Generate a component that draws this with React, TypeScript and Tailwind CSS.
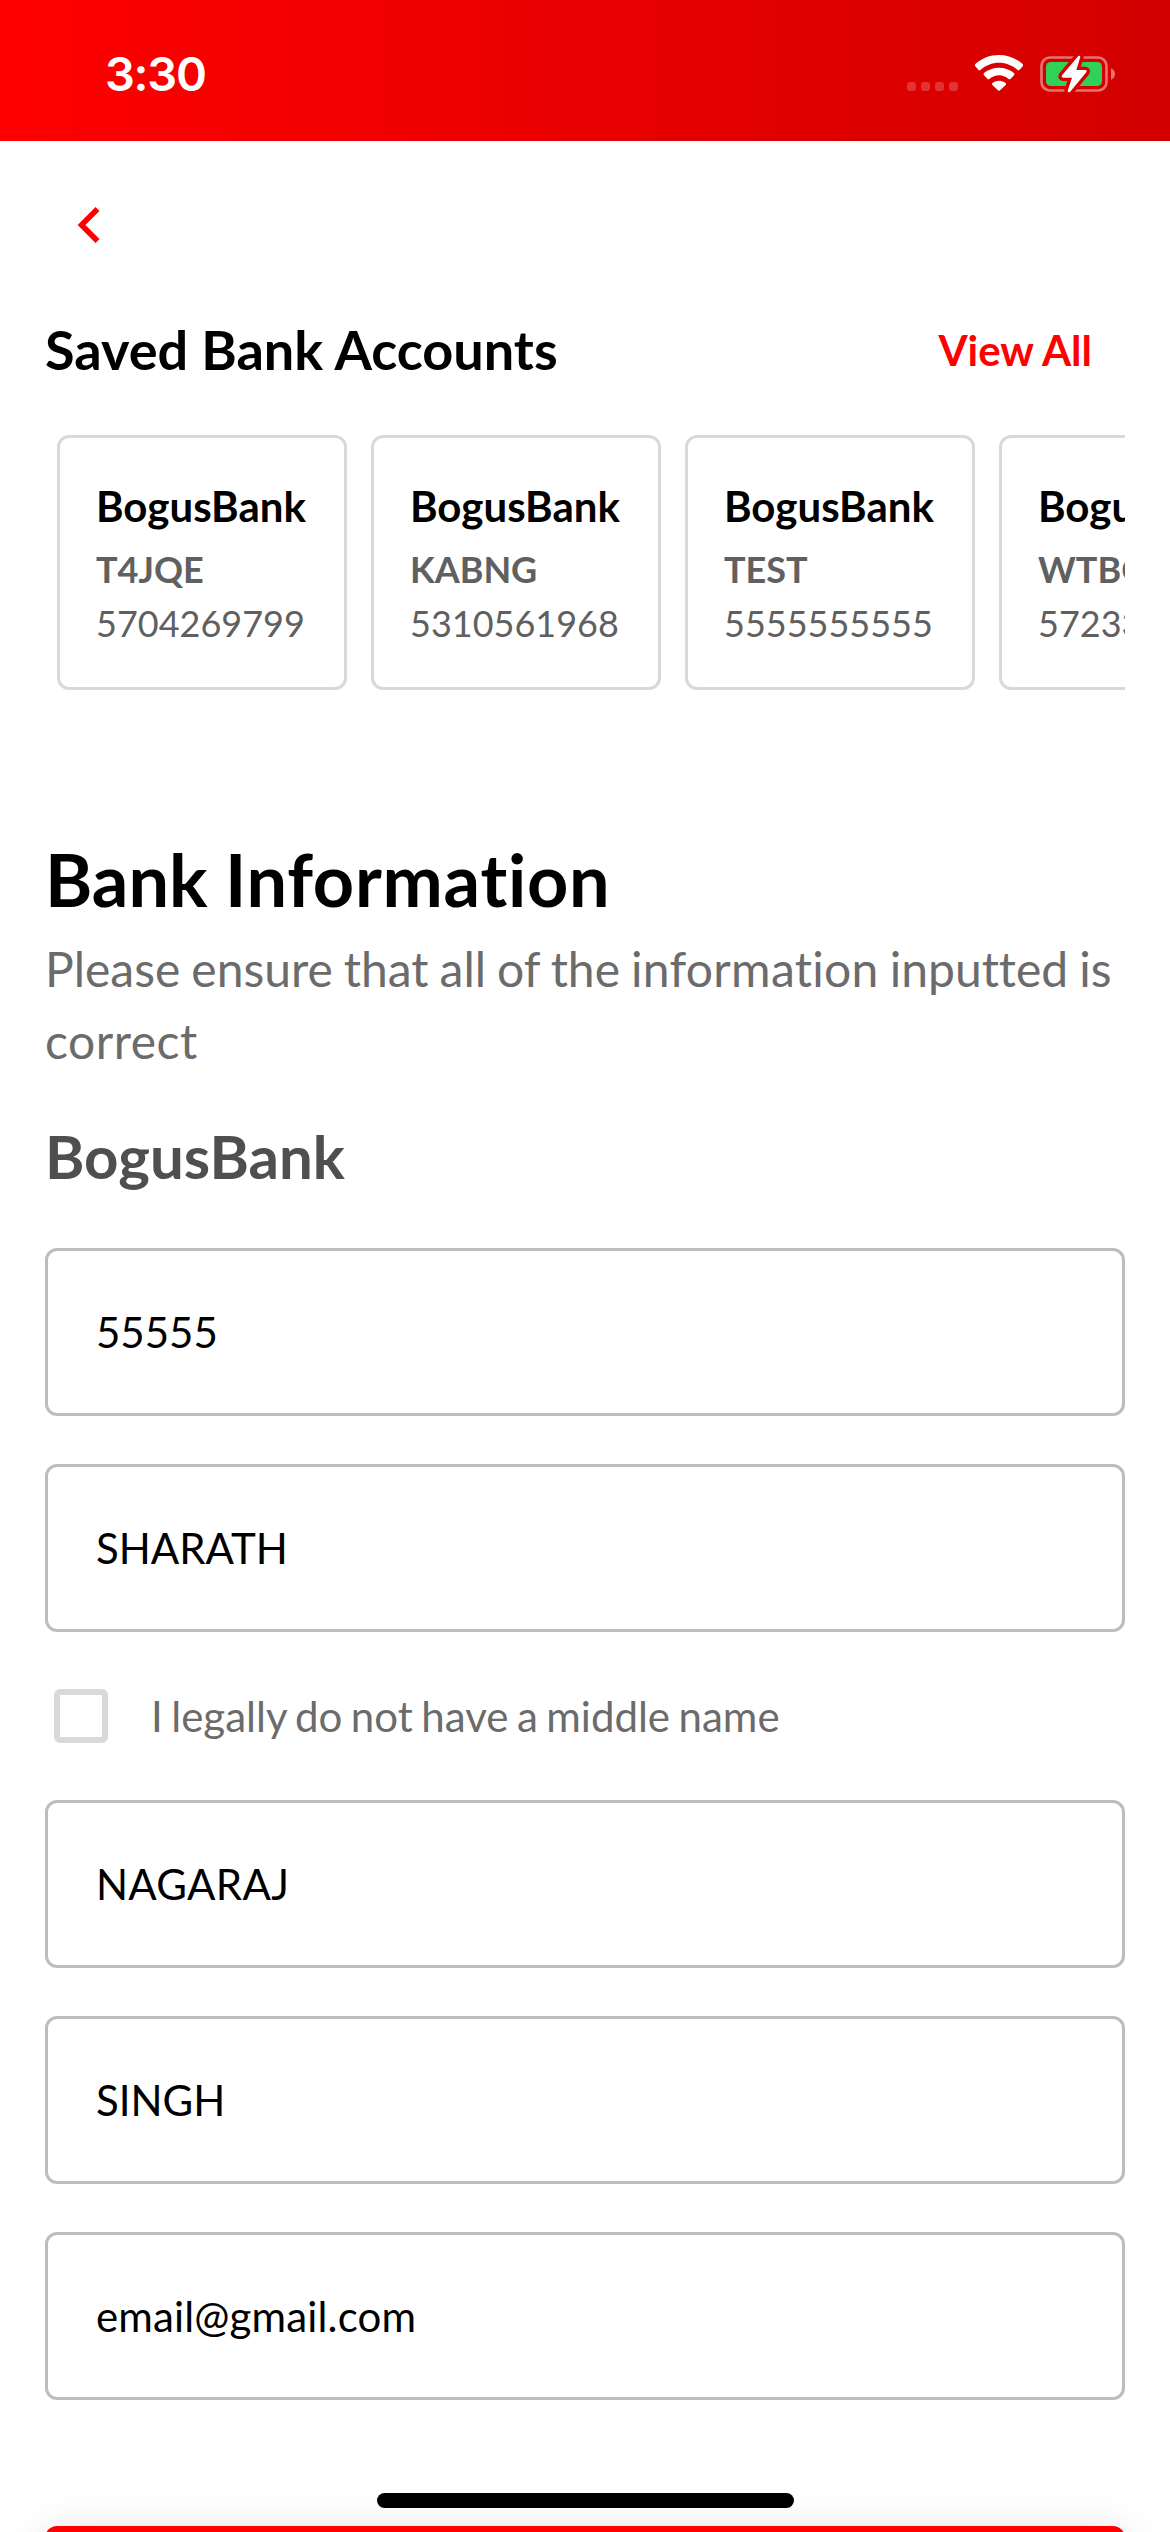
const accounts = [
  { bank: "BogusBank", code: "T4JQE", number: "5704269799" },
  { bank: "BogusBank", code: "KABNG", number: "5310561968" },
  { bank: "BogusBank", code: "TEST", number: "5555555555" },
  { bank: "BogusBank", code: "WTBGQ", number: "5723310482" },
];

function StatusBar() {
  return (
    <header className="flex h-[141px] shrink-0 items-start justify-between bg-linear-to-r from-[#ff0000] to-[#d20000] pl-[105px] pr-[54px]">
      <span className="mt-[45px] font-['Inter',sans-serif] text-[47px] leading-[58px] font-semibold tracking-[-1.3px] text-white">
        3:30
      </span>
      <div className="mt-[52px] flex items-start">
        <div className="mt-[30px] mr-[17px] flex gap-[5px]">
          <i className="size-[9px] rounded-[3px] bg-white/20" />
          <i className="size-[9px] rounded-[3px] bg-white/20" />
          <i className="size-[9px] rounded-[3px] bg-white/20" />
          <i className="size-[9px] rounded-[3px] bg-white/20" />
        </div>
        <svg className="mt-[3px] mr-[17px] h-9 w-12" viewBox="0 0 144 108" fill="#fff">
          <path d="M72 0C99 0 124 10 143 27Q146 30 143 34L134 44Q131 48 127 44C112 31 93 23 72 23S32 31 17 44Q13 48 10 44L1 34Q-2 30 1 27C20 10 45 0 72 0Z" />
          <path d="M72 38C89 38 105 44 117 54Q120 57 117 61L107 71Q103 74 100 71C92 65 82 61 72 61S52 65 44 71Q41 74 37 71L27 61Q24 57 27 54C39 44 55 38 72 38Z" />
          <path d="M72 77C80 77 87 80 92 84Q94 87 92 90L75 106Q72 109 69 106L52 90Q50 87 52 84C57 80 64 77 72 77Z" />
        </svg>
        <svg className="h-[44px] w-[76px]" viewBox="480 96 228 132">
          <rect x="484.500" y="112.500" width="195" height="99" rx="25" fill="none" stroke="#e87070" strokeWidth="8" />
          <path d="M693 145Q705 150 705 162T693 179Z" fill="#e87070" />
          <rect x="498" y="126" width="168" height="72" rx="14" fill="#30d158" />
          <path
            d="M595 108L546 166Q543 172 549 173H576L563 212Q564 219 570 216L619 157Q622 151 616 150H589L601 111Q600 105 595 108Z"
            fill="#d70000"
            stroke="#d70000"
            strokeWidth="20"
            strokeLinejoin="round"
          />
          <path
            d="M595 108L546 166Q543 172 549 173H576L563 212Q564 219 570 216L619 157Q622 151 616 150H589L601 111Q600 105 595 108Z"
            fill="#fff"
          />
        </svg>
      </div>
    </header>
  );
}

function Field({ value, tracking = "" }: { value: string; tracking?: string }) {
  return (
    <div
      className={`flex h-[168px] items-center rounded-[12px] border-[3px] border-[#bdbdbd] pl-12 text-[42px] leading-[50px] text-black ${tracking}`}
    >
      {value}
    </div>
  );
}

export default function App() {
  return (
    <div className="relative flex h-[2532px] w-[1170px] flex-col overflow-hidden bg-white font-['Lato',sans-serif] text-black [font-variant-ligatures:none]">
      <StatusBar />
      <main className="flex flex-col px-[45px]">
        <button className="mt-[66px] ml-[32px] h-9 w-6" aria-label="Back">
          <svg className="h-9 w-6" viewBox="0 0 24 36" fill="none" stroke="#ff0000" strokeWidth="5.500">
            <path d="M20.500 2L4.500 18L20.500 34" />
          </svg>
        </button>

        <div className="mt-[74px] flex h-[66px] items-center justify-between pr-[33px]">
          <h2 className="text-[54px] leading-[66px] font-bold">Saved Bank Accounts</h2>
          <a className="text-[42px] leading-[50px] font-bold text-[#ff0000]">View All</a>
        </div>

        <div className="mt-[52px] flex gap-6 overflow-hidden pl-3">
          {accounts.map((a) => (
            <div
              key={a.code}
              className="flex h-[255px] w-[290px] shrink-0 flex-col rounded-[12px] border-[3px] border-[#d9d9d9] pt-[41px] pl-9"
            >
              <div className="text-[42px] leading-[54px] font-bold">{a.bank}</div>
              <div className="mt-[9px] text-[36px] leading-[54px] font-bold text-[#606060]">{a.code}</div>
              <div className="text-[36px] leading-[54px] text-[#606060]">{a.number}</div>
            </div>
          ))}
        </div>

        <h1 className="mt-[144px] text-[72px] leading-[90px] font-bold">
          Bank <span className="tracking-[0.75px]">Information</span>
        </h1>
        <p className="mt-[9px] text-[48px] leading-[72px] [word-spacing:-1.3px] text-[#6b6b6b]">
          Please ensure that all of the <span className="tracking-[0.3px]">information</span> inputted is{" "}
          <span className="tracking-[0.5px]">correct</span>
        </p>
        <h3 className="mt-[43px] text-[60px] leading-[72px] font-bold text-[#4f4f4f]">BogusBank</h3>

        <div className="mt-[56px] flex flex-col gap-12">
          <Field value="55555" />
          <Field value="SHARATH" />
        </div>
        <label className="mt-[57px] mb-[57px] flex h-[54px] items-center pl-[9px]">
          <span className="size-[54px] rounded-[6px] border-[6px] border-[#d9d9d9]" />
          <span className="ml-[43px] text-[42px] leading-[50px] [word-spacing:-2.25px] text-[#6b6b6b]">
            I legally do not have a middle name
          </span>
        </label>
        <div className="flex flex-col gap-12">
          <Field value="NAGARAJ" tracking="tracking-[0.3px]" />
          <Field value="SINGH" />
          <Field value="email@gmail.com" tracking="tracking-[0.15px]" />
        </div>
        <button
          className="mt-[126px] h-[150px] rounded-[12px] bg-[#ff0000] shadow-[0_6px_42px_rgba(0,0,0,0.14)]"
          aria-label="Continue"
        />
      </main>
      <div className="absolute bottom-6 left-[377px] h-[15px] w-[417px] rounded-full bg-black" />
    </div>
  );
}
